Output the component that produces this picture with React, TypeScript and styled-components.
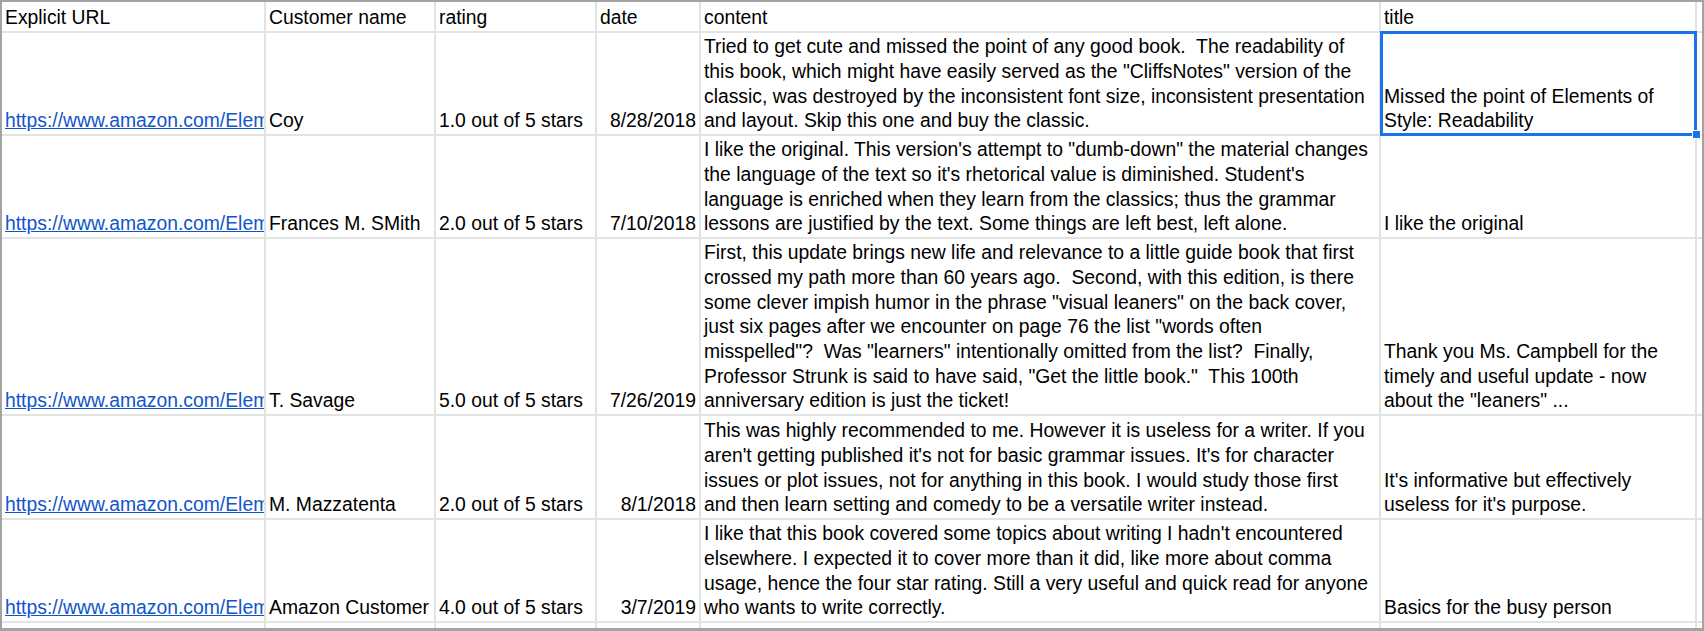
import React from 'react';
import styled, { createGlobalStyle } from 'styled-components';

interface Review {
  name: string;
  rating: string;
  date: string;
  content: string[];
  title: string[];
}

// the column is narrow, the sheet only ever shows the start of the link
const URL_TEXT = 'https://www.amazon.com/Elem';

const reviews: Review[] = [
  {
    name: 'Coy',
    rating: '1.0 out of 5 stars',
    date: '8/28/2018',
    content: [
      'Tried to get cute and missed the point of any good book.  The readability of',
      'this book, which might have easily served as the "CliffsNotes" version of the',
      'classic, was destroyed by the inconsistent font size, inconsistent presentation',
      'and layout. Skip this one and buy the classic.',
    ],
    title: ['Missed the point of Elements of', 'Style: Readability'],
  },
  {
    name: 'Frances M. SMith',
    rating: '2.0 out of 5 stars',
    date: '7/10/2018',
    content: [
      'I like the original. This version\'s attempt to "dumb-down" the material changes',
      "the language of the text so it's rhetorical value is diminished. Student's",
      'language is enriched when they learn from the classics; thus the grammar',
      'lessons are justified by the text. Some things are left best, left alone.',
    ],
    title: ['I like the original'],
  },
  {
    name: 'T. Savage',
    rating: '5.0 out of 5 stars',
    date: '7/26/2019',
    content: [
      'First, this update brings new life and relevance to a little guide book that first',
      'crossed my path more than 60 years ago.  Second, with this edition, is there',
      'some clever impish humor in the phrase "visual leaners" on the back cover,',
      'just six pages after we encounter on page 76 the list "words often',
      'misspelled"?  Was "learners" intentionally omitted from the list?  Finally,',
      'Professor Strunk is said to have said, "Get the little book."  This 100th',
      'anniversary edition is just the ticket!',
    ],
    title: ['Thank you Ms. Campbell for the', 'timely and useful update - now', 'about the "leaners" ...'],
  },
  {
    name: 'M. Mazzatenta',
    rating: '2.0 out of 5 stars',
    date: '8/1/2018',
    content: [
      'This was highly recommended to me. However it is useless for a writer. If you',
      "aren't getting published it's not for basic grammar issues. It's for character",
      'issues or plot issues, not for anything in this book. I would study those first',
      'and then learn setting and comedy to be a versatile writer instead.',
    ],
    title: ["It's informative but effectively", "useless for it's purpose."],
  },
  {
    name: 'Amazon Customer',
    rating: '4.0 out of 5 stars',
    date: '3/7/2019',
    content: [
      "I like that this book covered some topics about writing I hadn't encountered",
      'elsewhere. I expected it to cover more than it did, like more about comma',
      'usage, hence the four star rating. Still a very useful and quick read for anyone',
      'who wants to write correctly.',
    ],
    title: ['Basics for the busy person'],
  },
];

const headers = ['Explicit URL', 'Customer name', 'rating', 'date', 'content', 'title'];

const GlobalStyle = createGlobalStyle`
  html, body {
    margin: 0;
    padding: 0;
    background: #fff;
  }
  body {
    font-family: "Liberation Sans", Arial, sans-serif;
  }
`;

const Frame = styled.div`
  width: 1704px;
  height: 631px;
  box-sizing: border-box;
  border: 2px solid #a3a3a3;
  border-bottom-width: 3px;
  overflow: hidden;
`;

const Sheet = styled.div`
  display: grid;
  grid-template-columns: 262px 168px 159px 102px 678px 314px 1fr;
  grid-template-rows: 29px 101px 101px 175px 102px 101px 1fr;
  gap: 2px;
  height: 100%;
  background: #e2e3e3;
  font-size: 19.33px;
  line-height: 24.65px;
  color: #000;
`;

const Cell = styled.div<{ $align?: 'left' | 'right' }>`
  position: relative;
  min-width: 0;
  display: flex;
  align-items: flex-end;
  justify-content: ${({ $align }) => ($align === 'right' ? 'flex-end' : 'flex-start')};
  padding: 0 3px;
  background: #fff;
  white-space: pre;
  overflow: hidden;
`;

const LinkCell = styled(Cell)`
  padding-right: 0;
`;

const SelectedCell = styled(Cell)`
  overflow: visible;
`;

const Link = styled.a`
  display: block;
  min-width: 0;
  overflow: hidden;
  white-space: nowrap;
  text-overflow: clip;
  color: #1155cc;
  text-decoration: underline;
`;

const Selection = styled.div`
  position: absolute;
  top: -2px;
  left: -1px;
  right: -2px;
  bottom: -2px;
  border: 3px solid #1a73e8;
  z-index: 2;
  pointer-events: none;
`;

const Handle = styled.span`
  position: absolute;
  right: -7px;
  bottom: -6px;
  width: 7px;
  height: 7px;
  background: #1a73e8;
  border: 1px solid #fff;
`;

const App: React.FC = () => (
  <>
    <GlobalStyle />
    <Frame>
      <Sheet>
        {headers.map((h) => (
          <Cell key={h}>{h}</Cell>
        ))}
        <Cell />

        {reviews.map((r, i) => {
          const TitleCell = i === 0 ? SelectedCell : Cell;
          return (
            <React.Fragment key={r.name}>
              <LinkCell>
                <Link href="#">{URL_TEXT}</Link>
              </LinkCell>
              <Cell>{r.name}</Cell>
              <Cell>{r.rating}</Cell>
              <Cell $align="right">{r.date}</Cell>
              <Cell>{r.content.join('\n')}</Cell>
              <TitleCell>
                {r.title.join('\n')}
                {i === 0 && (
                  <Selection>
                    <Handle />
                  </Selection>
                )}
              </TitleCell>
              <Cell />
            </React.Fragment>
          );
        })}

        {headers.map((h) => (
          <Cell key={`blank-${h}`} />
        ))}
        <Cell />
      </Sheet>
    </Frame>
  </>
);

export default App;
